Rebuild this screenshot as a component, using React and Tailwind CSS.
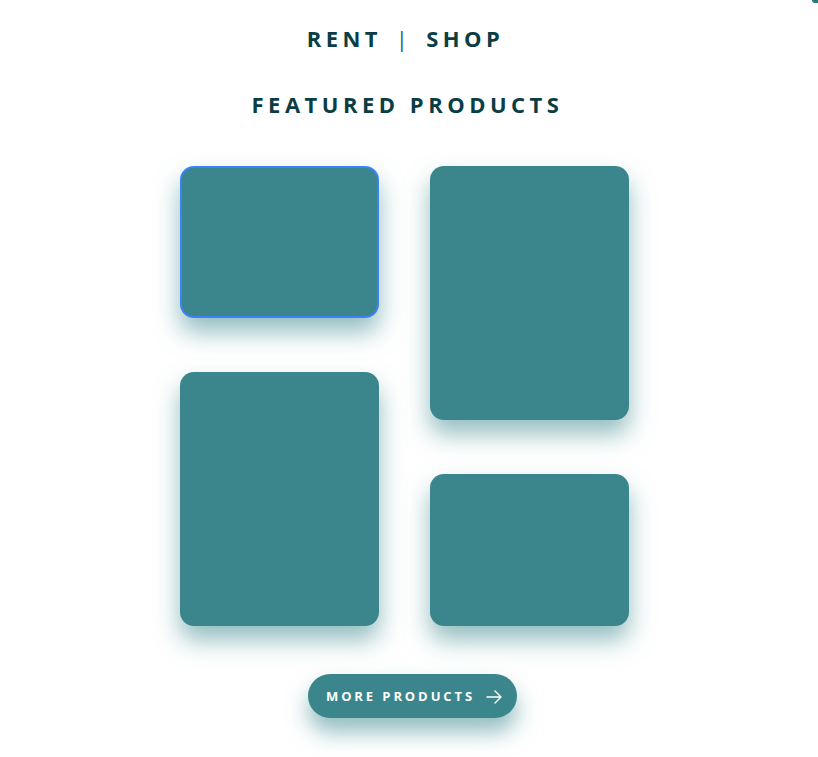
const cardClass =
  'w-[199px] rounded-[14px] bg-[#3a868c] shadow-[0_14px_24px_rgba(58,134,140,0.55)]';

const ArrowRight = () => (
  <svg width="16" height="14" viewBox="0 0 16 14" fill="none" stroke="currentColor" strokeWidth="1.4" strokeLinecap="round" strokeLinejoin="round">
    <path d="M1 7h14M9 1l6 6-6 6" />
  </svg>
);

const App = () => {
  return (
    <div className="relative min-h-[757px] bg-white font-['Open_Sans',sans-serif] text-[#0b3d44]">
      <div className="absolute right-0 top-0 h-[3px] w-[6px] rounded-bl-full bg-[#2a7a75]" />
      <div className="flex flex-col items-center pr-[9px] pt-[23px]">
        <h1 className="ml-[2px] flex items-center text-[22px] font-bold leading-[30px] tracking-[4.4px]">
          <span>RENT</span>
          <span className="mx-[14px] font-normal text-[#1b6a70]">|</span>
          <span>SHOP</span>
        </h1>
        <h2 className="ml-[6px] mt-[36px] text-[22px] font-bold leading-[30px] tracking-[4.5px]">
          FEATURED PRODUCTS
        </h2>

        <div className="mt-[47px] flex gap-[51px]">
          <div className="flex flex-col gap-[54px]">
            <div className={`${cardClass} h-[152px] border-2 border-[#3b82f6]`} />
            <div className={`${cardClass} h-[254px]`} />
          </div>
          <div className="flex flex-col gap-[54px]">
            <div className={`${cardClass} h-[254px]`} />
            <div className={`${cardClass} h-[152px]`} />
          </div>
        </div>

        <button
          type="button"
          className="ml-[15px] mt-[48px] flex h-[44px] w-[209px] items-center justify-center gap-[11px] rounded-full bg-[#3a868c] pl-[4px] pt-[2px] text-[13px] font-bold tracking-[2.9px] text-white shadow-[0_14px_22px_rgba(58,134,140,0.55)]"
        >
          <span>MORE PRODUCTS</span>
          <ArrowRight />
        </button>
      </div>
    </div>
  );
};

export default App;
